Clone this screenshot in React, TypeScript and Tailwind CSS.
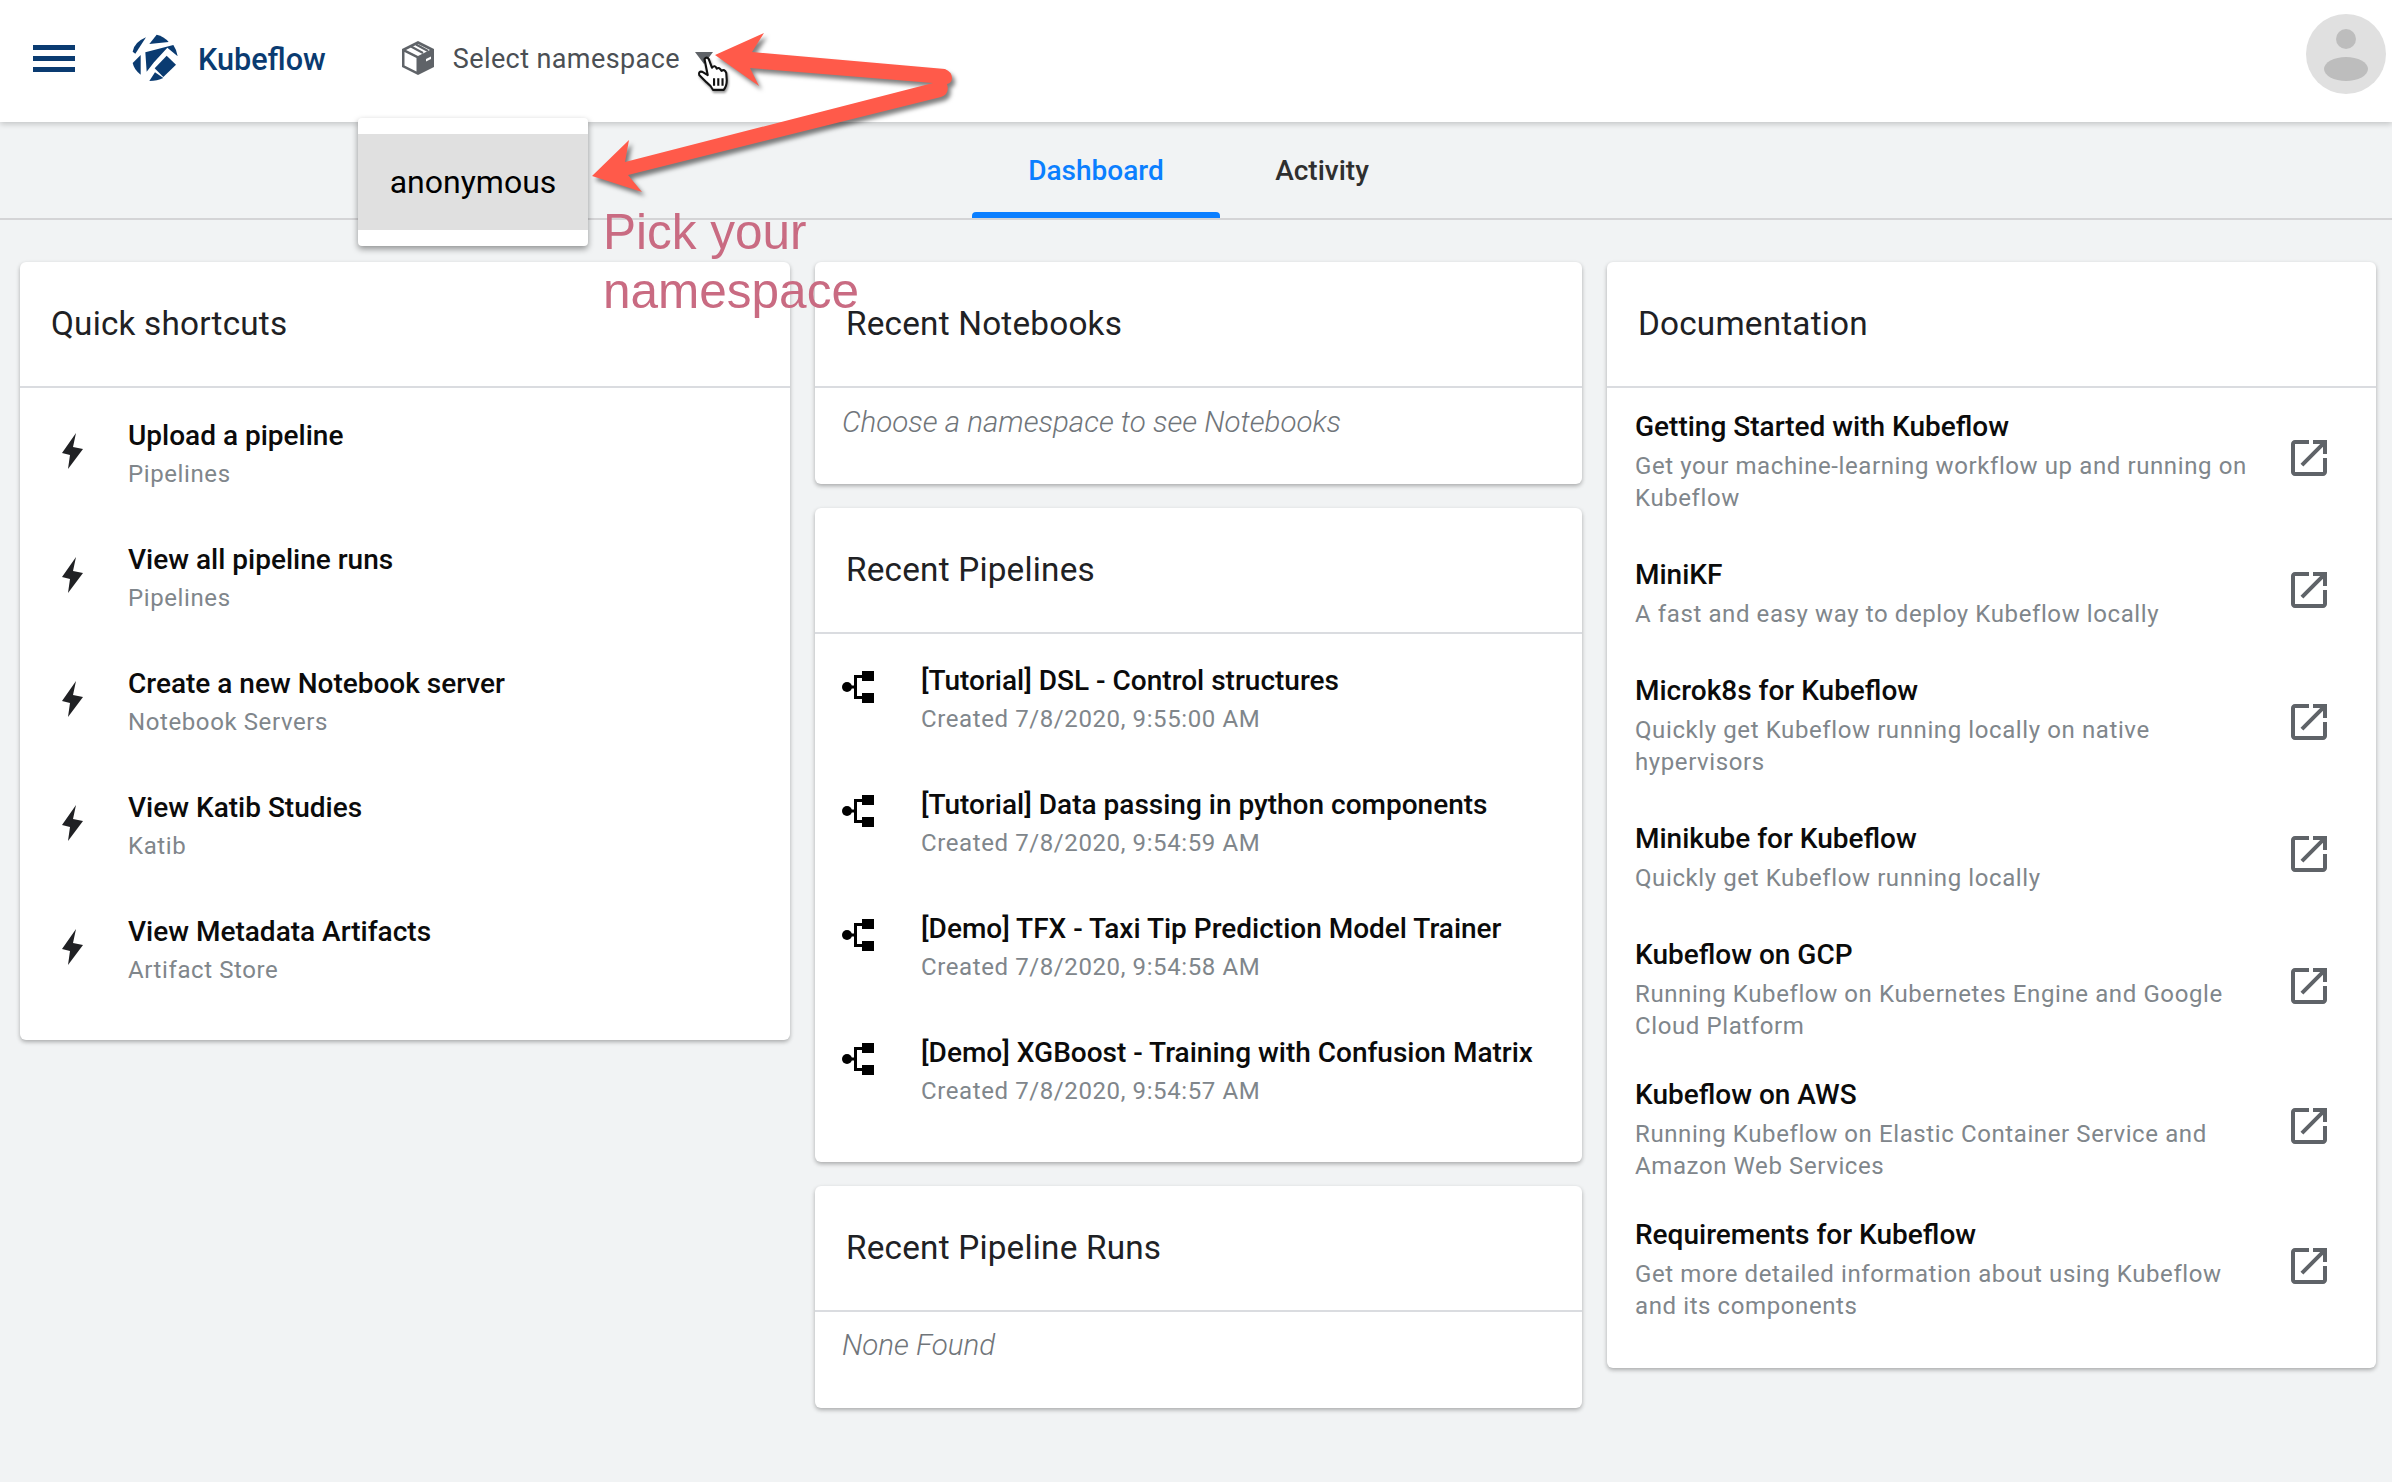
import React from "react";

const shortcuts = [
  ["Upload a pipeline", "Pipelines"],
  ["View all pipeline runs", "Pipelines"],
  ["Create a new Notebook server", "Notebook Servers"],
  ["View Katib Studies", "Katib"],
  ["View Metadata Artifacts", "Artifact Store"],
];

const pipelines = [
  ["[Tutorial] DSL - Control structures", "Created 7/8/2020, 9:55:00 AM"],
  ["[Tutorial] Data passing in python components", "Created 7/8/2020, 9:54:59 AM"],
  ["[Demo] TFX - Taxi Tip Prediction Model Trainer", "Created 7/8/2020, 9:54:58 AM"],
  ["[Demo] XGBoost - Training with Confusion Matrix", "Created 7/8/2020, 9:54:57 AM"],
];

const docs: { t: string; d: string; cls: string; icon: string }[] = [
  { t: "Getting Started with Kubeflow", d: "Get your machine-learning workflow up and running on Kubeflow", cls: "h-[148px]", icon: "mt-[27px]" },
  { t: "MiniKF", d: "A fast and easy way to deploy Kubeflow locally", cls: "h-[116px]", icon: "mt-[11px]" },
  { t: "Microk8s for Kubeflow", d: "Quickly get Kubeflow running locally on native hypervisors", cls: "h-[148px]", icon: "mt-[27px]" },
  { t: "Minikube for Kubeflow", d: "Quickly get Kubeflow running locally", cls: "h-[116px]", icon: "mt-[11px]" },
  { t: "Kubeflow on GCP", d: "Running Kubeflow on Kubernetes Engine and Google Cloud Platform", cls: "h-[140px]", icon: "mt-[27px]" },
  { t: "Kubeflow on AWS", d: "Running Kubeflow on Elastic Container Service and Amazon Web Services", cls: "h-[140px]", icon: "mt-[27px]" },
  { t: "Requirements for Kubeflow", d: "Get more detailed information about using Kubeflow and its components", cls: "h-[140px]", icon: "mt-[27px]" },
];

function Bolt() {
  return (
    <svg viewBox="0 0 21 36" className="w-[21px] h-[36px] shrink-0" fill="#202124">
      <path d="M14 0 L0 20 L8 22 L6 36 L21 16 L11 14 Z" />
    </svg>
  );
}

function PipelineIcon() {
  return (
    <svg viewBox="0 0 32 32" className="w-[32px] h-[32px] shrink-0" fill="#000">
      <circle cx="5" cy="16" r="5" />
      <rect x="5" y="14.5" width="9" height="3" />
      <rect x="12" y="4" width="3" height="24" />
      <rect x="12" y="4" width="10" height="3" />
      <rect x="12" y="25" width="10" height="3" />
      <rect x="20" y="0" width="12" height="10" />
      <rect x="20" y="22" width="12" height="10" />
    </svg>
  );
}

function OpenInNew() {
  return (
    <svg viewBox="0 0 24 24" className="w-[48px] h-[48px] shrink-0" fill="#5f6368">
      <path d="M19 19H5V5h7V3H5c-1.11 0-2 .9-2 2v14c0 1.1.89 2 2 2h14c1.1 0 2-.9 2-2v-7h-2v7zM14 3v2h3.59l-9.83 9.83 1.41 1.41L19 6.41V10h2V3h-7z" />
    </svg>
  );
}

function Logo() {
  return (
    <svg viewBox="60 40 150 150" className="w-[50px] h-[50px] shrink-0" fill="#0a3b71">
      <path d="M68 96 Q72 68 108 53 L76 102 Z" />
      <path d="M118 73 L140 45 Q162 50 176 67 Z" />
      <path d="M106 98 L190 76 Q200 90 203 110 L172 84 L132 128 L110 156 Z" />
      <path d="M170 108 L198 135 L160 172 L134 146 Z" />
      <path d="M118 184 L135 158 L160 175 Q142 184 118 184 Z" />
      <path d="M68 130 L92 106 L92 165 Q72 150 68 130 Z" />
    </svg>
  );
}

function Cube() {
  return (
    <svg viewBox="0 0 34 34" className="w-[34px] h-[34px] shrink-0">
      <path d="M17 0 L33 8 V26 L17 34 L1 26 V8 Z" fill="#5f6368" />
      <path d="M17 3 L29 9 L17 15 L5 9 Z" fill="#fff" />
      <path d="M10 5.5 L22 12 M15 3.5 L27 10" stroke="#5f6368" strokeWidth="2" fill="none" />
      <path d="M3.5 11 L15.5 17 V30.5 L3.5 24.5 Z" fill="#fff" />
      <path d="M25 18 L30 15.5 V18 L25 20.5 Z" fill="#fff" />
    </svg>
  );
}

function Card({ title, children, className = "" }: { title: string; children: React.ReactNode; className?: string }) {
  return (
    <section className={`bg-white rounded-[6px] shadow-[0_2px_4px_rgba(0,0,0,0.3)] ${className}`}>
      <h2 className="h-[126px] pl-[31px] flex items-center border-b-2 border-[#dadce0] text-[33.3px] text-[#202124] tracking-[0.2px]">
        {title}
      </h2>
      {children}
    </section>
  );
}

function IconRow({ icon, title, sub, iconBox }: { icon: React.ReactNode; title: string; sub: string; iconBox: string }) {
  return (
    <div className="h-[124px] flex items-center">
      <div className={`${iconBox} flex items-center`}>{icon}</div>
      <div>
        <div className="text-[28px] leading-[38px] font-medium text-[#0b0b0b]">{title}</div>
        <div className="text-[24px] leading-[38px] text-[#80868b] tracking-[0.6px]">{sub}</div>
      </div>
    </div>
  );
}

export default function App() {
  return (
    <div className="relative min-h-screen w-full overflow-hidden bg-[#f1f3f4] font-['Roboto',sans-serif]">
      <header className="h-[122px] bg-white flex items-center shadow-[0_2px_6px_rgba(0,0,0,0.2)] relative pl-[33px] pb-[6px]">
        <div className="w-[42px] flex flex-col gap-[6px]">
          <div className="h-[5px] bg-[#0a3b71]" />
          <div className="h-[5px] bg-[#0a3b71]" />
          <div className="h-[5px] bg-[#0a3b71]" />
        </div>
        <div className="ml-[55px]">
          <Logo />
        </div>
        <span className="ml-[18px] mt-[4px] text-[30.6px] font-medium text-[#0a3b71]">Kubeflow</span>
        <div className="ml-[75px]">
          <Cube />
        </div>
        <span className="ml-[18px] mt-[3px] text-[27px] text-[#4b4f54] tracking-[0.4px]">Select namespace</span>
        <div className="ml-[15px] w-0 h-0 border-x-[9px] border-x-transparent border-t-[12px] border-t-[#5f6368]" />
        <div className="ml-auto mr-[6px] -mt-[8px] w-[80px] h-[80px] rounded-full bg-[#e0e0e0] flex flex-col items-center pt-[15px]">
          <div className="w-[20px] h-[20px] rounded-full bg-[#bdbdbd]" />
          <div className="mt-[8px] w-[44px] h-[24px] rounded-[50%] bg-[#bdbdbd]" />
        </div>
      </header>

      <nav className="h-[98px] border-b-2 border-[#d4d4d6] flex justify-center pl-[4px]">
        <div className="w-[248px] flex flex-col text-[#0b7fff]">
          <div className="flex-1 pt-[7px] flex items-center justify-center text-[28px] font-medium">Dashboard</div>
          <div className="h-[6px] rounded-t-[4px] bg-[#0b7fff]" />
        </div>
        <div className="w-[204px] flex flex-col">
          <div className="flex-1 pt-[7px] flex items-center justify-center text-[28px] font-medium text-[#2f2f2f]">Activity</div>
          <div className="h-[6px]" />
        </div>
      </nav>

      <main className="pl-[20px] pt-[42px] grid grid-cols-[770px_767px_769px] gap-x-[25px] items-start">
        <Card title="Quick shortcuts" className="h-[778px]">
          <div className="pt-[5px]">
            {shortcuts.map(([t, s]) => (
              <IconRow key={t} icon={<Bolt />} title={t} sub={s} iconBox="w-[108px] pl-[42px] mb-[9px]" />
            ))}
          </div>
        </Card>

        <div className="flex flex-col gap-[24px]">
          <Card title="Recent Notebooks" className="h-[222px]">
            <div className="pt-[14px] pl-[27px] text-[29.5px] leading-[40px] italic font-light text-[#70757a]">
              Choose a namespace to see Notebooks
            </div>
          </Card>
          <Card title="Recent Pipelines" className="h-[654px]">
            <div className="pt-[4px]">
              {pipelines.map(([t, s]) => (
                <IconRow key={t} icon={<PipelineIcon />} title={t} sub={s} iconBox="w-[106px] pl-[27px] mb-[27px]" />
              ))}
            </div>
          </Card>
          <Card title="Recent Pipeline Runs" className="h-[222px]">
            <div className="pt-[13px] pl-[27px] text-[29.5px] leading-[40px] italic font-light text-[#70757a]">
              None Found
            </div>
          </Card>
        </div>

        <Card title="Documentation" className="h-[1106px]">
          <div className="pt-[19px] pl-[28px] pr-[43px]">
            {docs.map((d) => (
              <div key={d.t} className={`${d.cls} flex items-start`}>
                <div className="flex-1">
                  <div className="text-[28px] leading-[40px] font-medium text-[#0b0b0b]">{d.t}</div>
                  <div className="mt-[3px] text-[24px] leading-[32px] text-[#80868b] tracking-[0.6px] w-[630px]">{d.d}</div>
                </div>
                <div className={d.icon}>
                  <OpenInNew />
                </div>
              </div>
            ))}
          </div>
        </Card>
      </main>

      {/* namespace dropdown */}
      <div className="absolute left-[358px] top-[118px] w-[230px] h-[128px] bg-white rounded-[4px] shadow-[0_3px_6px_rgba(0,0,0,0.4)] py-[16px]">
        <div className="h-[96px] bg-[#e0e0e0] flex items-center justify-center text-[32px] text-black">anonymous</div>
      </div>

      {/* annotation */}
      <div className="absolute left-[603px] top-[202px] text-[49.5px] leading-[59px] font-['Liberation_Sans',sans-serif] text-[#c96b82]">
        Pick your
        <br />
        namespace
      </div>

      {/* mouse cursor */}
      <svg
        className="absolute left-[696px] top-[56px] w-[34px] h-[36px] drop-shadow-[1px_2px_1px_rgba(0,0,0,0.4)]"
        viewBox="0 0 30 34"
        fill="#fff"
        stroke="#111"
        strokeWidth="2"
        strokeLinejoin="round"
      >
        <path d="M7 3 Q9 0 11 3 L14 11 Q17 8 18.5 12 Q21 10 23 14 Q26 12 27.5 16 L28 23 Q28 29 25 32 L15 32 Q13 28 9 25 L2 18 Q1 14 5 15 L10 18 Z" />
        <path d="M16 21 V28 M20 21 V28 M24 21 V28" fill="none" />
      </svg>

      {/* annotation arrows */}
      <svg
        className="absolute left-0 top-0 w-[1000px] h-[300px] drop-shadow-[3px_4px_2px_rgba(0,0,0,0.5)]"
        viewBox="0 0 1000 300"
        fill="#ff5a4a"
      >
        <path d="M715 55 L764 33 L752 52 L945 69 Q952 72 952 78 Q952 83 947 84 Q949 90 946 94 Q944 96 941 97 L628 175 L642 192 L592 176 L629 140 L625 162 L933 83 L750 68 L759 86 Z" />
      </svg>
    </div>
  );
}
